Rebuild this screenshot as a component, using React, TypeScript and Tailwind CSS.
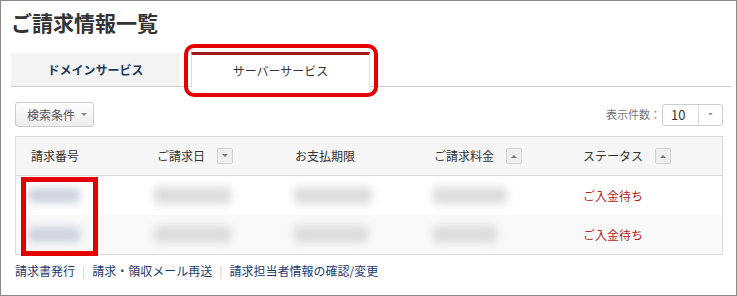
import React from 'react';

type Row = { no: number; date: number; due: number; fee: number; status: string };

const rows: Row[] = [
    { no: 52, date: 77, due: 78, fee: 74, status: 'ご入金待ち' },
    { no: 52, date: 77, due: 74, fee: 64, status: 'ご入金待ち' },
];

const SortButton: React.FC<{ up?: boolean }> = ({ up }) => (
    <span className="ml-[12px] inline-flex items-center justify-center w-[16px] h-[16px] border border-[#d4d4d4] rounded-[2px] bg-[#efefef]">
        <svg width="6" height="4" viewBox="0 0 6 4">
            {up ? <path d="M0 4 L3 1 L6 4 Z" fill="#777" /> : <path d="M0 0 L3 3 L6 0 Z" fill="#777" />}
        </svg>
    </span>
);

const Blur: React.FC<{ w: number; blue?: boolean }> = ({ w, blue }) => (
    <div
        className={blue ? 'h-[15px] rounded-[4px] bg-[#cdd2de] blur-[4px]' : 'h-[17px] rounded-[4px] bg-[#dcdcdc] blur-[4px]'}
        style={{ width: w }}
    />
);

const App: React.FC = () => {
    return (
        <div
            className="relative w-[737px] h-[296px] bg-white border border-[#8a8a8a] overflow-hidden"
            style={{ fontFamily: '"Noto Sans CJK JP", "Noto Sans", sans-serif' }}
        >
            <div className="pl-[10px] pr-[5px]">
                <h1 className="pt-[6px] h-[35px] leading-[30px] text-[21px] font-bold text-[#333]">ご請求情報一覧</h1>

                {/* tabs */}
                <div className="mt-[16px] flex h-[35px] border-b border-[#cfcfcf]">
                    <div className="mt-[1px] w-[169px] flex items-center justify-center bg-[#f3f3f3] text-[12px] font-bold text-[#22395f]">
                        ドメインサービス
                    </div>
                    <div className="ml-[11px] w-[179px] -mb-[1px] flex items-center justify-center bg-white border-t-[3px] border-t-[#a11a1a] border-x border-x-[#dcdcdc] text-[12px] text-[#333]">
                        サーバーサービス
                    </div>
                </div>

                {/* search + page size */}
                <div className="mt-[15px] ml-[4px] mr-[8px] flex items-center justify-between h-[25px]">
                    <button className="h-[25px] w-[79px] flex items-center pl-[11px] border border-[#cccccc] rounded-[3px] bg-gradient-to-b from-white to-[#ececec] text-[12px] text-[#555]">
                        検索条件
                        <svg className="ml-[6px]" width="6" height="4" viewBox="0 0 6 4"><path d="M0 0 L3 3 L6 0 Z" fill="#888" /></svg>
                    </button>
                    <div className="flex items-center">
                        <span className="text-[11px] text-[#777]">表示件数：</span>
                        <div className="ml-[1px] flex h-[22px] w-[61px] border border-[#cccccc] rounded-[3px] bg-white">
                            <span className="flex-1 pl-[8px] flex items-center text-[13px] text-[#333]">10</span>
                            <span className="w-[24px] flex items-center justify-center border-l border-[#dddddd]">
                                <svg width="5" height="3" viewBox="0 0 6 4"><path d="M0 0 L3 3 L6 0 Z" fill="#888" /></svg>
                            </span>
                        </div>
                    </div>
                </div>

                {/* table */}
                <div className="mt-[9px] ml-[4px] mr-[8px] border border-[#dcdcdc]">
                    <div className="flex h-[39px] items-center bg-[#f6f6f6] border-b border-[#d6d6d6] text-[12px] text-[#333]">
                        <div className="w-[126px] pl-[15px]">請求番号</div>
                        <div className="w-[138px] pl-[15px] flex items-center">ご請求日<SortButton /></div>
                        <div className="w-[139px] pl-[15px]">お支払期限</div>
                        <div className="w-[149px] pl-[15px] flex items-center">ご請求料金<SortButton up /></div>
                        <div className="flex-1 pl-[15px] flex items-center">ステータス<SortButton up /></div>
                    </div>
                    {rows.map((r, i) => (
                        <div key={i} className={`flex h-[39px] items-center text-[12px] ${i % 2 === 1 ? 'bg-[#f9f9f9]' : 'bg-white'}`}>
                            <div className="w-[126px] pl-[12px]"><Blur w={r.no} blue /></div>
                            <div className="w-[138px] pl-[12px]"><Blur w={r.date} /></div>
                            <div className="w-[139px] pl-[14px]"><Blur w={r.due} /></div>
                            <div className="w-[149px] pl-[14px]"><Blur w={r.fee} /></div>
                            <div className="flex-1 pl-[15px] text-[#b3241c]">{r.status}</div>
                        </div>
                    ))}
                </div>

                {/* footer links */}
                <div className="mt-[7px] ml-[4px] flex items-center text-[12px] text-[#1f3b70]">
                    <a>請求書発行</a>
                    <span className="mx-[7px] text-[#cccccc]">|</span>
                    <a>請求・領収メール再送</a>
                    <span className="mx-[7px] text-[#cccccc]">|</span>
                    <a>請求担当者情報の確認/変更</a>
                </div>
            </div>

            {/* annotations */}
            <div className="absolute left-[183px] top-[43px] w-[194px] h-[53px] border-[4px] border-[#e50000] rounded-[10px]" />
            <div className="absolute left-[20px] top-[176px] w-[77px] h-[79px] border-[5px] border-[#e50000]" />
        </div>
    );
};

export default App;
